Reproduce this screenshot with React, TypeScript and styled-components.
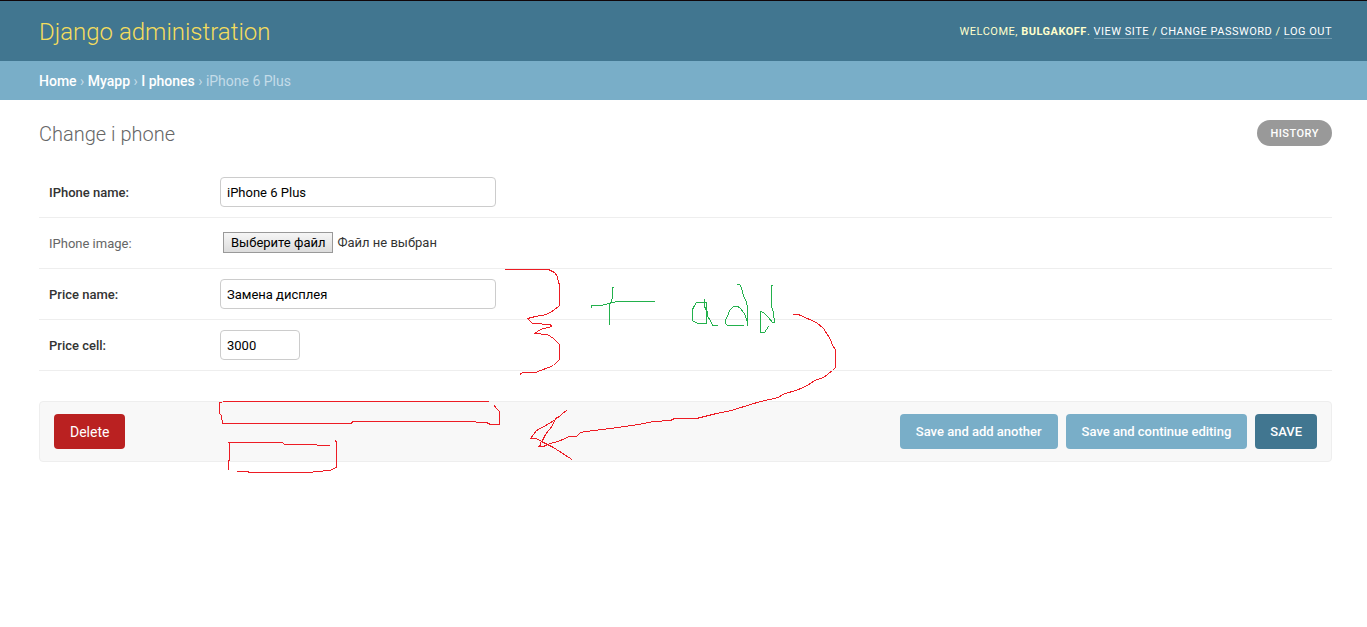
import React from 'react';
import styled, { createGlobalStyle, css } from 'styled-components';

const GlobalStyle = createGlobalStyle`
  *, *::before, *::after { box-sizing: border-box; }
  body {
    margin: 0;
    background: #fff;
    color: #333;
    font-family: Roboto, "Liberation Sans", sans-serif;
    font-size: 14px;
  }
  a { text-decoration: none; color: inherit; }
`;

const Page = styled.div`
  position: relative;
  border-top: 1px solid #100508;
`;

const Header = styled.header`
  display: flex;
  align-items: center;
  justify-content: space-between;
  height: 60px;
  padding: 2px 35px 0 39px;
  background: #417690;
  color: #ffc;
`;

const SiteName = styled.h1`
  margin: 0;
  font-size: 24px;
  font-weight: 300;
  line-height: 28px;
  color: #f5dd5d;
`;

const UserTools = styled.nav`
  font-size: 11px;
  line-height: 14px;
  letter-spacing: 0.5px;
  text-transform: uppercase;
`;

const ToolLink = styled.a`
  color: #fff;
  border-bottom: 1px solid rgba(255, 255, 255, 0.25);
`;

const Breadcrumbs = styled.nav`
  padding: 12px 35px 11px 39px;
  background: #79aec8;
  color: #c4dce8;
  font-size: 14px;
  line-height: 16px;
`;

const Crumb = styled.a`
  color: #fff;
  font-weight: 500;
`;

const Content = styled.main`
  padding: 20px 35px 20px 39px;
`;

const TitleRow = styled.div`
  display: flex;
  align-items: center;
  justify-content: space-between;
  margin-bottom: 21px;
`;

const Title = styled.h2`
  margin: 0;
  padding-top: 2px;
  font-size: 20px;
  font-weight: 300;
  line-height: 24px;
  color: #666;
`;

const HistoryLink = styled.a`
  padding: 2px 13px 0;
  border-radius: 13px;
  background: #999;
  color: #fff;
  font-size: 11px;
  font-weight: 500;
  line-height: 24px;
  letter-spacing: 0.5px;
  text-transform: uppercase;
`;

const Row = styled.div`
  display: flex;
  align-items: center;
  height: 51px;
  padding: 0 10px;
  border-bottom: 1px solid #eee;
`;

const Label = styled.label<{ $required?: boolean }>`
  flex: 0 0 171px;
  padding-top: 2px;
  font-size: 13px;
  line-height: 16px;
  font-weight: ${(p) => (p.$required ? 500 : 400)};
  color: ${(p) => (p.$required ? '#333' : '#666')};
`;

const Input = styled.input<{ $short?: boolean }>`
  width: ${(p) => (p.$short ? 80 : 276)}px;
  height: 30px;
  padding: 5px 6px;
  border: 1px solid #ccc;
  border-radius: 4px;
  background: #fff;
  color: #000;
  font: 400 13px/16px Roboto, "Liberation Sans", sans-serif;
  outline: none;
`;

const FilePicker = styled.div`
  display: flex;
  align-items: baseline;
  gap: 4px;
  padding: 0 3px 1px;
  font-size: 13px;
  line-height: 16px;
`;

const FileInput = styled.input`
  position: absolute;
  width: 1px;
  height: 1px;
  opacity: 0;
`;

const FileButton = styled.label`
  padding: 0 7px;
  border: 1px solid #999;
  background: linear-gradient(#f6f6f6, #dcdcdc);
  color: #000;
  font-size: 13px;
  line-height: 19px;
`;

const SubmitRow = styled.div`
  display: flex;
  gap: 8px;
  margin-top: 30px;
  padding: 12px 14px;
  border: 1px solid #eee;
  border-radius: 4px;
  background: #f8f8f8;
`;

const buttonLook = css`
  height: 35px;
  border: 0;
  border-radius: 4px;
  color: #fff;
  font-family: inherit;
`;

const DeleteLink = styled.a`
  ${buttonLook}
  margin-right: auto;
  padding: 2px 16px 0;
  background: #ba2121;
  font-size: 14px;
  line-height: 33px;
`;

const SubmitButton = styled.button<{ $primary?: boolean }>`
  ${buttonLook}
  padding: 0 ${(p) => (p.$primary ? 15 : 16)}px;
  background: ${(p) => (p.$primary ? '#417690' : '#79aec8')};
  font-size: 13px;
  font-weight: 500;
  line-height: 35px;
`;

const Sketch = styled.svg`
  position: absolute;
  top: -1px;
  left: 0;
  width: 860px;
  height: 480px;
  pointer-events: none;
  fill: none;
  stroke-width: 1px;
  shape-rendering: crispEdges;
`;

const redStrokes = [
  // curly brace beside the price fields
  'M505 269.5H548.5L554.5 272.5L557.5 276.5L558.5 282.5L559.5 284.5V305.5L553.5 310.5L546.5 314.5L535.5 316.5L527.5 318.5L532.5 323.5L550.5 324.5L551.5 326.5L540.5 329.5L534.5 333.5L547.5 334.5L553.5 338.5L559.5 344.5V359.5L553.5 365.5L535.5 372.5H522.5L520 374.5',
  // long arrow shaft
  'M793 314.5H798.5L809.5 319.5L816.5 322.5L823.5 328.5L830.5 339.5L832.5 345.5L835.5 349.5V367.5L832.5 370.5L823.5 377.5L814.5 380.5L807.5 385.5L798.5 389.5L782.5 394.5L778.5 397.5L760.5 401.5L750.5 404.5L731.5 410.5L716.5 413.5L696.5 418.5H674.5L670.5 420.5L653.5 421.5L638.5 424.5L617.5 427.5L586.5 431.5L580.5 432.5L576.5 436.5H569.5L560.5 440.5L547.5 444.5L543.5 446.5H537.5',
  // arrow head
  'M567.5 409.5L555.5 419.5L547.5 424.5L536.5 430.5L530.5 438.5H536.5L541.5 441.5L553.5 447.5L572 459.5',
  'M560.5 415.5L555.5 418.5L552.5 425.5L545.5 434.5L542.5 440.5L540.5 442.5V445.5L538.5 446.5',
  // wide box
  'M223 401.5H489M221.5 402.5H219.5V413.5L221.5 415.5L222.5 423.5H351.5L352.5 421.5H475.5L476.5 422.5H486.5L490.5 424.5H499.5V411.5L495.5 407.5L494.5 405.5',
  // narrow box
  'M330 445.5H317.5L316.5 444.5H284.5L282.5 442.5H228.5L229.5 443.5V460.5H228.5V470M237 471.5H248L249 472.5H310L316.5 471.5L329.5 470.5L336.5 467.5V442.5L335.5 440.5',
];

const greenStrokes = [
  // plus sign
  'M591.5 308V305.5H600.5L609.5 303.5L611.5 302.5H614.5L615.5 301.5H655M613.5 287.5H612.5V296.5L611.5 302.5M609.5 303V325',
  // a
  'M703.5 299.5H704.5V306.5L707.5 312.5V316.5L710.5 320.5L712.5 325.5H718M706.5 302.5H696.5L693.5 307.5L692.5 309.5V320.5L697.5 323.5H706.5V302.5',
  // d
  'M737 284.5H739.5L741.5 287.5L743.5 296.5L745.5 299.5L747.5 306.5V326M747.5 322.5L744.5 313.5L739.5 307.5L737.5 306.5H733.5L729.5 310.5L727.5 316.5L725.5 319.5V323.5L727.5 325.5H744',
  // d
  'M773 285.5H771.5V306.5L773.5 312.5L774.5 322.5H772.5L768.5 317.5L763.5 312.5L760.5 311.5V332.5H764.5L766.5 329.5L768.5 326.5',
];

export default function App() {
  return (
    <>
      <GlobalStyle />
      <Page>
        <Header>
          <SiteName>
            <a href="#home">Django administration</a>
          </SiteName>
          <UserTools>
            Welcome, <strong>bulgakoff</strong>. <ToolLink href="#site">View site</ToolLink> /{' '}
            <ToolLink href="#password">Change password</ToolLink> /{' '}
            <ToolLink href="#logout">Log out</ToolLink>
          </UserTools>
        </Header>
        <Breadcrumbs>
          <Crumb href="#home">Home</Crumb> › <Crumb href="#myapp">Myapp</Crumb> ›{' '}
          <Crumb href="#iphones">I phones</Crumb> › iPhone 6 Plus
        </Breadcrumbs>
        <Content>
          <TitleRow>
            <Title>Change i phone</Title>
            <HistoryLink href="#history">History</HistoryLink>
          </TitleRow>
          <form onSubmit={(e) => e.preventDefault()}>
            <Row>
              <Label $required htmlFor="name">IPhone name:</Label>
              <Input id="name" type="text" defaultValue="iPhone 6 Plus" />
            </Row>
            <Row>
              <Label htmlFor="image">IPhone image:</Label>
              <FilePicker>
                <FileInput id="image" type="file" />
                <FileButton htmlFor="image">Выберите файл</FileButton>
                <span>Файл не выбран</span>
              </FilePicker>
            </Row>
            <Row>
              <Label $required htmlFor="price-name">Price name:</Label>
              <Input id="price-name" type="text" defaultValue="Замена дисплея" />
            </Row>
            <Row>
              <Label $required htmlFor="price-cell">Price cell:</Label>
              <Input $short id="price-cell" type="text" inputMode="numeric" defaultValue="3000" />
            </Row>
            <SubmitRow>
              <DeleteLink href="#delete">Delete</DeleteLink>
              <SubmitButton type="submit">Save and add another</SubmitButton>
              <SubmitButton type="submit">Save and continue editing</SubmitButton>
              <SubmitButton type="submit" $primary>SAVE</SubmitButton>
            </SubmitRow>
          </form>
        </Content>
        <Sketch viewBox="0 0 860 480" aria-hidden="true">
          <g stroke="#ed1c24">
            {redStrokes.map((d) => <path key={d} d={d} />)}
          </g>
          <g stroke="#22b14c">
            {greenStrokes.map((d) => <path key={d} d={d} />)}
          </g>
        </Sketch>
      </Page>
    </>
  );
}
